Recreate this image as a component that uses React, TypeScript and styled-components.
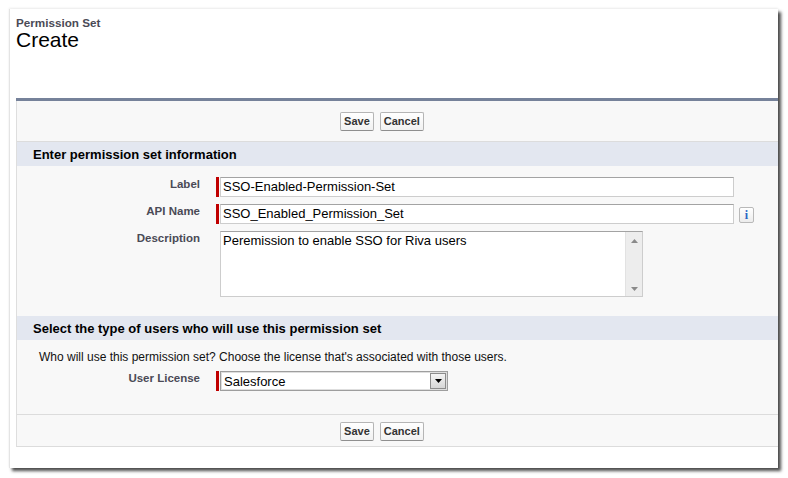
import styled, { createGlobalStyle } from 'styled-components';

const GlobalStyle = createGlobalStyle`
  html, body {
    margin: 0;
    padding: 0;
    background: #ffffff;
    font-family: "Liberation Sans", Arial, sans-serif;
  }
`;

const Page = styled.div`
  padding: 9px 0 12px 9px;
`;

const Card = styled.div`
  width: 769px;
  box-sizing: border-box;
  padding: 0 0 21px 6px;
  background: #ffffff;
  border-left: 1px solid #e4e4e4;
  box-shadow: 3px 3px 3px 0 rgba(0, 0, 0, 0.7), 0 -1px 2px rgba(0, 0, 0, 0.08);
`;

const Header = styled.div`
  height: 89px;
  box-sizing: border-box;
  padding: 7px 0 0 0;
`;

const PageType = styled.div`
  font-size: 11.7px;
  line-height: 13px;
  font-weight: bold;
  color: #4a4a56;
`;

const PageTitle = styled.h1`
  margin: 0;
  font-size: 21px;
  line-height: 22px;
  font-weight: normal;
  color: #000000;
`;

const Rule = styled.div`
  height: 3px;
  background: #76829a;
`;

const Panel = styled.div`
  background: #f8f8f8;
  border-left: 1px solid #dedede;
  border-bottom: 1px solid #dcdcdc;
`;

const ButtonRow = styled.div<{ $bottom?: boolean }>`
  display: flex;
  justify-content: center;
  gap: 6px;
  padding: ${(p) => (p.$bottom ? '7px 31px 5px 0' : '11px 31px 10px 0')};
  border-top: ${(p) => (p.$bottom ? '1px solid #dcdcdc' : 'none')};
  border-bottom: ${(p) => (p.$bottom ? 'none' : '1px solid #dcdcdc')};
`;

const Btn = styled.button`
  font-family: "Liberation Sans", Arial, sans-serif;
  font-size: 11px;
  font-weight: bold;
  line-height: 13px;
  color: #333333;
  padding: 2px 3px;
  margin: 0;
  border: 1px solid #b5b5b5;
  border-bottom-color: #8f8f8f;
  border-radius: 2px;
  background: linear-gradient(#ffffff, #f1f1f1);
`;

const SectionHeader = styled.h3`
  margin: 0;
  height: 24px;
  display: flex;
  align-items: center;
  padding-left: 16px;
  background: #e3e7f0;
  font-size: 13px;
  font-weight: bold;
  color: #000000;
`;

const SectionBody = styled.div<{ $pad: string }>`
  display: flex;
  flex-direction: column;
  gap: 7px;
  padding: ${(p) => p.$pad};
`;

const FieldRow = styled.div`
  display: flex;
  align-items: flex-start;
`;

const FieldLabel = styled.label`
  width: 183px;
  margin-right: 16px;
  text-align: right;
  font-size: 11.5px;
  line-height: 14px;
  font-weight: bold;
  color: #4a4a56;
`;

const Control = styled.div`
  display: flex;
  align-items: stretch;
`;

const Required = styled.span<{ $on: boolean }>`
  width: 3px;
  margin-right: 1px;
  background: ${(p) => (p.$on ? '#c00000' : 'transparent')};
`;

const TextBox = styled.div<{ $width: number }>`
  width: ${(p) => p.$width}px;
  height: 20px;
  box-sizing: border-box;
  padding: 0 2px;
  border: 1px solid #cdcdcd;
  border-top-color: #a3a3a3;
  background: #ffffff;
  font-size: 13px;
  line-height: 18px;
  color: #000000;
  white-space: nowrap;
`;

const InfoBadge = styled.span`
  width: 15px;
  height: 16px;
  box-sizing: border-box;
  margin: 3px 0 0 5px;
  display: flex;
  align-items: center;
  justify-content: center;
  border: 1px solid #b9b9b9;
  border-radius: 2px;
  background: linear-gradient(#ffffff, #ececec);
  font-family: "Liberation Serif", "Times New Roman", serif;
  font-weight: bold;
  font-size: 12px;
  color: #2a66c4;
`;

const TextAreaBox = styled.div`
  width: 423px;
  height: 66px;
  box-sizing: border-box;
  display: flex;
  border: 1px solid #cdcdcd;
  border-top-color: #a3a3a3;
  background: #ffffff;
`;

const TextAreaText = styled.div`
  flex: 1;
  padding: 1px 2px;
  font-size: 13px;
  line-height: 16px;
  color: #000000;
`;

const ScrollTrack = styled.div`
  width: 16px;
  display: flex;
  flex-direction: column;
  justify-content: space-between;
  align-items: center;
  padding: 7px 0 5px;
  background: #ededed;
  border-left: 1px solid #e2e2e2;
`;

const Instruction = styled.div`
  padding-left: 22px;
  font-size: 12px;
  line-height: 14px;
  color: #111111;
`;

const SelectBox = styled.div`
  width: 228px;
  height: 20px;
  box-sizing: border-box;
  display: flex;
  align-items: center;
  justify-content: space-between;
  padding: 0 1px 0 3px;
  border: 1px solid #9e9e9e;
  box-shadow: inset 0 0 0 1px #dedede;
  background: #ffffff;
  font-size: 13px;
  color: #000000;
`;

const SelectButton = styled.span`
  width: 16px;
  height: 16px;
  box-sizing: border-box;
  display: flex;
  align-items: center;
  justify-content: center;
  border: 1px solid #8c8c8c;
  background: linear-gradient(#f4f4f4, #d6d6d6);
`;

const Arrow = ({ down, color }: { down?: boolean; color: string }) => (
  <svg width="7" height="4" viewBox="0 0 7 4">
    <path d={down ? 'M0 0 H7 L3.5 4 Z' : 'M0 4 H7 L3.5 0 Z'} fill={color} />
  </svg>
);

const App = () => {
  return (
    <>
      <GlobalStyle />
      <Page>
        <Card>
          <Header>
            <PageType>Permission Set</PageType>
            <PageTitle>Create</PageTitle>
          </Header>
          <Rule />
          <Panel>
            <ButtonRow>
              <Btn>Save</Btn>
              <Btn>Cancel</Btn>
            </ButtonRow>

            <SectionHeader>Enter permission set information</SectionHeader>
            <SectionBody $pad="11px 0 19px">
              <FieldRow>
                <FieldLabel>Label</FieldLabel>
                <Control>
                  <Required $on />
                  <TextBox $width={514}>SSO-Enabled-Permission-Set</TextBox>
                </Control>
              </FieldRow>
              <FieldRow>
                <FieldLabel>API Name</FieldLabel>
                <Control>
                  <Required $on />
                  <TextBox $width={514}>SSO_Enabled_Permission_Set</TextBox>
                </Control>
                <InfoBadge>i</InfoBadge>
              </FieldRow>
              <FieldRow>
                <FieldLabel>Description</FieldLabel>
                <Control>
                  <Required $on={false} />
                  <TextAreaBox>
                    <TextAreaText>Peremission to enable SSO for Riva users</TextAreaText>
                    <ScrollTrack>
                      <Arrow color="#8a8a8a" />
                      <Arrow down color="#8a8a8a" />
                    </ScrollTrack>
                  </TextAreaBox>
                </Control>
              </FieldRow>
            </SectionBody>

            <SectionHeader>Select the type of users who will use this permission set</SectionHeader>
            <SectionBody $pad="10px 0 23px">
              <Instruction>
                Who will use this permission set? Choose the license that's associated with those users.
              </Instruction>
              <FieldRow>
                <FieldLabel>User License</FieldLabel>
                <Control>
                  <Required $on />
                  <SelectBox>
                    Salesforce
                    <SelectButton>
                      <Arrow down color="#000000" />
                    </SelectButton>
                  </SelectBox>
                </Control>
              </FieldRow>
            </SectionBody>

            <ButtonRow $bottom>
              <Btn>Save</Btn>
              <Btn>Cancel</Btn>
            </ButtonRow>
          </Panel>
        </Card>
      </Page>
    </>
  );
};

export default App;
